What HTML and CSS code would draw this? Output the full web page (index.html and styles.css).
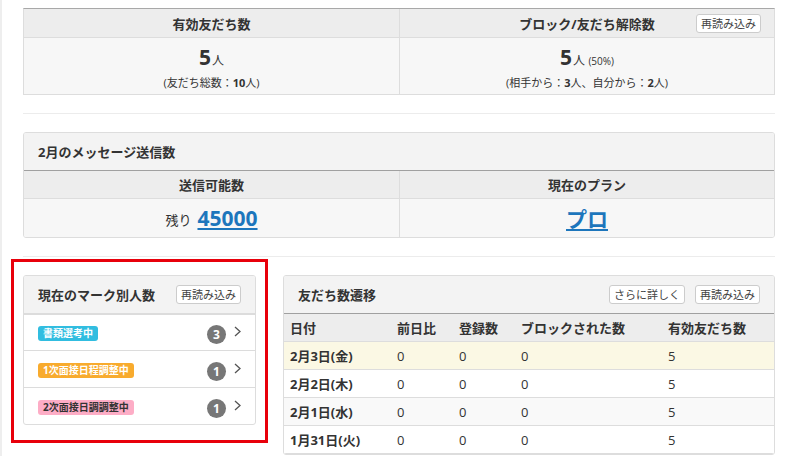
FILE: index.html
```html
<!DOCTYPE html>
<html lang="ja">
<head>
<meta charset="utf-8">
<title>ダッシュボード</title>
<link rel="stylesheet" href="styles.css">
</head>
<body>
<div class="page">
  <section class="stats">
    <div class="stats-head"><span class="head-text">有効友だち数</span></div>
    <div class="stats-head stats-head-right"><span></span><span class="head-text">ブロック/友だち解除数</span><span class="head-end"><button class="btn">再読み込み</button></span></div>
    <div class="stats-body">
      <div class="big"><b>5</b><span class="unit">人</span></div>
      <div class="sub">(友だち総数：<b>10</b>人)</div>
    </div>
    <div class="stats-body stats-body-right">
      <div class="big"><b>5</b><span class="unit">人</span> <span class="pct">(50%)</span></div>
      <div class="sub">(相手から：<b>3</b>人、自分から：<b>2</b>人)</div>
    </div>
  </section>

  <hr class="sep">

  <section class="panel">
    <div class="panel-head"><h2 class="panel-title">2月のメッセージ送信数</h2></div>
    <div class="msg-grid">
      <div class="msg-th">送信可能数</div>
      <div class="msg-th msg-right">現在のプラン</div>
      <div class="msg-td"><span class="rest">残り</span><a class="link big-link" href="#">45000</a></div>
      <div class="msg-td msg-right"><a class="link big-link" href="#">プロ</a></div>
    </div>
  </section>

  <hr class="sep">

  <div class="bottom">
    <div class="marks-col">
      <div class="highlight">
        <section class="panel">
          <div class="panel-head"><h2 class="panel-title">現在のマーク別人数</h2><button class="btn">再読み込み</button></div>
          <ul class="marks">
            <li class="mark-row"><span class="tag tag-cyan">書類選考中</span><span class="mark-end"><span class="count">3</span><svg class="chev" width="7" height="11" viewBox="0 0 7 11"><polyline points="1,1 6,5.5 1,10" fill="none" stroke="#555" stroke-width="1.3"/></svg></span></li>
            <li class="mark-row"><span class="tag tag-orange">1次面接日程調整中</span><span class="mark-end"><span class="count">1</span><svg class="chev" width="7" height="11" viewBox="0 0 7 11"><polyline points="1,1 6,5.5 1,10" fill="none" stroke="#555" stroke-width="1.3"/></svg></span></li>
            <li class="mark-row"><span class="tag tag-pink">2次面接日調調整中</span><span class="mark-end"><span class="count">1</span><svg class="chev" width="7" height="11" viewBox="0 0 7 11"><polyline points="1,1 6,5.5 1,10" fill="none" stroke="#555" stroke-width="1.3"/></svg></span></li>
          </ul>
        </section>
      </div>
    </div>

    <section class="panel friends">
      <div class="panel-head"><h2 class="panel-title">友だち数遷移</h2><span class="btns"><button class="btn">さらに詳しく</button><button class="btn">再読み込み</button></span></div>
      <table class="ftable">
        <colgroup><col class="c1"><col class="c2"><col class="c3"><col class="c4"><col class="c5"></colgroup>
        <thead>
          <tr><th>日付</th><th>前日比</th><th>登録数</th><th>ブロックされた数</th><th>有効友だち数</th></tr>
        </thead>
        <tbody>
          <tr class="today"><td class="date">2月3日(金)</td><td>0</td><td>0</td><td>0</td><td>5</td></tr>
          <tr><td class="date">2月2日(木)</td><td>0</td><td>0</td><td>0</td><td>5</td></tr>
          <tr class="alt"><td class="date">2月1日(水)</td><td>0</td><td>0</td><td>0</td><td>5</td></tr>
          <tr><td class="date">1月31日(火)</td><td>0</td><td>0</td><td>0</td><td>5</td></tr>
        </tbody>
      </table>
    </section>
  </div>
</div>
</body>
</html>
```

FILE: styles.css
```css
* { box-sizing: border-box; }
html, body { margin: 0; padding: 0; background: #fff; }
body {
  font-family: "Open Sans", "Noto Sans CJK JP", sans-serif;
  font-size: 13px;
  color: #333;
}
.page {
  height: 456px;
  overflow: hidden;
  border-left: 2px solid #eeeeee;
  padding: 8px 18px 0 21px;
}

/* top stats */
.stats {
  display: grid;
  grid-template-columns: 1fr 1fr;
  border: 1px solid #ddd;
  border-top: 1px solid #a8a8a8;
}
.stats-head {
  height: 29px;
  background: #ededed;
  border-bottom: 1px solid #ddd;
  display: grid;
  grid-template-columns: 1fr auto 1fr;
  align-items: center;
  font-weight: bold;
  font-size: 13px;
}
.stats-head .head-text { grid-column: 2; }
.stats-head-right { border-left: 1px solid #ddd; }
.head-end { display: flex; justify-content: flex-end; padding-right: 13px; }
.stats-body {
  height: 56px;
  background: #f7f7f7;
  display: flex;
  flex-direction: column;
  align-items: center;
  padding-top: 7px;
}
.stats-body-right { border-left: 1px solid #ddd; }
.big { line-height: 24px; }
.big b { font-size: 21px; font-weight: bold; }
.unit { font-size: 12px; margin-left: 1px; }
.pct { font-size: 10px; }
.sub { font-size: 11px; line-height: 18px; margin-top: 1px; }
.sub b { font-weight: bold; }

.btn {
  font-family: "Open Sans", "Noto Sans CJK JP", sans-serif;
  font-size: 11px;
  color: #444;
  background: #fff;
  border: 1px solid #ccc;
  border-radius: 3px;
  height: 19px;
  padding: 0 4px;
  line-height: 17px;
  margin: 0;
}

.sep {
  border: 0;
  border-top: 1px solid #ececec;
  margin: 18px 0;
  height: 0;
}

/* panels */
.panel {
  border: 1px solid #ddd;
  border-radius: 3px;
  background: #fff;
  overflow: hidden;
}
.panel-head {
  height: 37px;
  background: #f3f3f3;
  display: flex;
  align-items: center;
  justify-content: space-between;
  padding: 0 14px 0 14px;
}
.panel-title {
  margin: 0;
  font-size: 13px;
  font-weight: bold;
}

/* messages */
.msg-grid {
  display: grid;
  grid-template-columns: 1fr 1fr;
  border-top: 1px solid #a0a0a0;
}
.msg-th {
  height: 28px;
  background: #ededed;
  border-bottom: 1px solid #ddd;
  display: flex;
  align-items: center;
  justify-content: center;
  font-weight: bold;
}
.msg-right { border-left: 1px solid #ddd; }
.msg-td {
  height: 38px;
  background: #f7f7f7;
  display: flex;
  align-items: center;
  justify-content: center;
}
.rest { font-size: 13px; margin-right: 6px; margin-top: 3px; }
.link { color: #1d76bc; }
.big-link { font-size: 21px; font-weight: bold; text-decoration: underline; }

/* bottom */
.bottom {
  display: flex;
  align-items: flex-start;
  gap: 27px;
}
.marks-col { width: 233px; flex: none; }
.highlight {
  border: 3px solid #e8000b;
  margin: -16px -12px 0 -12px;
  padding: 13px 9px 15px 9px;
}
.marks { list-style: none; margin: 0; padding: 0; }
.mark-row {
  height: 37px;
  border-top: 1px solid #dcdcdc;
  display: flex;
  align-items: center;
  justify-content: space-between;
  padding: 0 14px 0 14px;
}
.mark-row:first-child { border-top: 2px solid #dcdcdc; height: 37px; }
.tag {
  display: inline-block;
  height: 15px;
  line-height: 15px;
  padding: 0 5px;
  border-radius: 3px;
  font-size: 10px;
  font-weight: bold;
  color: #fff;
  margin-top: 2px;
}
.tag-cyan { background: #31bde0; }
.tag-orange { background: #f8ab2e; }
.tag-pink { background: #fdadc6; color: #333; }
.mark-end { display: flex; align-items: center; gap: 8px; }
.count {
  width: 19px;
  height: 19px;
  border-radius: 50%;
  background: #777;
  color: #fff;
  font-size: 12px;
  font-weight: bold;
  display: flex;
  align-items: center;
  justify-content: center;
  margin-top: 4px;
}
.chev { display: block; margin-top: -2px; }

/* friends */
.friends { flex: 1; }
.btns { display: flex; gap: 10px; }
.ftable {
  width: 100%;
  border-collapse: collapse;
  table-layout: fixed;
  border-top: 1px solid #a0a0a0;
}
.c1 { width: 107px; }
.c2 { width: 62px; }
.c3 { width: 62px; }
.c4 { width: 147px; }
.ftable th {
  height: 28px;
  background: #ededed;
  text-align: left;
  font-weight: bold;
  padding: 0 6px;
  border-bottom: 1px solid #ddd;
}
.ftable td {
  height: 28px;
  padding: 0 6px;
  border-bottom: 1px solid #ddd;
  background: #fff;
}
.ftable td.date { font-weight: bold; }
.ftable tr.today td { background: #fbf8e4; }
.ftable tr.alt td { background: #f9f9f9; }
```
